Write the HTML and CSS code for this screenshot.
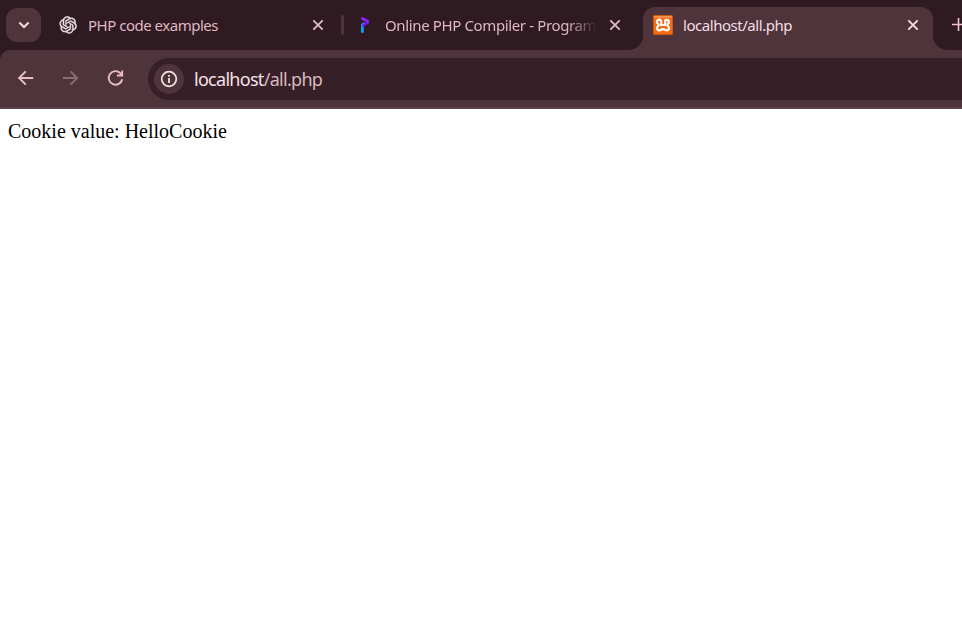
FILE: index.html
```html
<!DOCTYPE html>
<html lang="en">
<head>
<meta charset="utf-8">
<title>localhost/all.php</title>
<link rel="stylesheet" href="styles.css">
</head>
<body>
<header class="tab-strip">
  <button class="tab-search" aria-label="Search tabs">
    <svg width="12" height="8" viewBox="0 0 12 8"><path d="M1.3 1.5 6 6l4.7-4.5" fill="none" stroke="currentColor" stroke-width="2"/></svg>
  </button>
  <div class="tab tab-first">
    <svg class="favicon" viewBox="-2.2 -1.9 28 28"><path fill="#eee3e6" stroke="#eee3e6" stroke-width=".6" d="M22.2819 9.8211a5.9847 5.9847 0 0 0-.5157-4.9108 6.0462 6.0462 0 0 0-6.5098-2.9A6.0651 6.0651 0 0 0 4.9807 4.1818a5.9847 5.9847 0 0 0-3.9977 2.9 6.0462 6.0462 0 0 0 .7427 7.0966 5.98 5.98 0 0 0 .511 4.9107 6.051 6.051 0 0 0 6.5146 2.9001A5.9847 5.9847 0 0 0 13.2599 24a6.0557 6.0557 0 0 0 5.7718-4.2058 5.9894 5.9894 0 0 0 3.9977-2.9001 6.0557 6.0557 0 0 0-.7475-7.0729zm-9.022 12.6081a4.4755 4.4755 0 0 1-2.8764-1.0408l.1419-.0804 4.7783-2.7582a.7948.7948 0 0 0 .3927-.6813v-6.7369l2.02 1.1686a.071.071 0 0 1 .038.052v5.5826a4.504 4.504 0 0 1-4.4945 4.4944zm-9.6607-4.1254a4.4708 4.4708 0 0 1-.5346-3.0137l.142.0852 4.783 2.7582a.7712.7712 0 0 0 .7806 0l5.8428-3.3685v2.3324a.0804.0804 0 0 1-.0332.0615L9.74 19.9502a4.4992 4.4992 0 0 1-6.1408-1.6464zM2.3408 7.8956a4.485 4.485 0 0 1 2.3655-1.9728V11.6a.7664.7664 0 0 0 .3879.6765l5.8144 3.3543-2.0201 1.1685a.0757.0757 0 0 1-.071 0l-4.8303-2.7865A4.504 4.504 0 0 1 2.3408 7.872zm16.5963 3.8558L13.1038 8.364 15.1192 7.2a.0757.0757 0 0 1 .071 0l4.8303 2.7913a4.4944 4.4944 0 0 1-.6765 8.1042v-5.6772a.79.79 0 0 0-.407-.667zm2.0107-3.0231l-.142-.0852-4.7735-2.7818a.7759.7759 0 0 0-.7854 0L9.409 9.2297V6.8974a.0662.0662 0 0 1 .0284-.0615l4.8303-2.7866a4.4992 4.4992 0 0 1 6.6802 4.66zM8.3065 12.863l-2.02-1.1638a.0804.0804 0 0 1-.038-.0567V6.0742a4.4992 4.4992 0 0 1 7.3757-3.4537l-.142.0805L8.704 5.459a.7948.7948 0 0 0-.3927.6813zm1.0976-2.3654l2.602-1.4998 2.6069 1.4998v2.9994l-2.5974 1.4997-2.6067-1.4997Z"/></svg>
    <span class="tab-title"><span class="t-php">PHP code examples</span></span>
    <svg class="close" viewBox="0 0 12 12"><path d="m1.3 1.3 9.4 9.4m0-9.4-9.4 9.4"/></svg>
  </div>
  <div class="divider"></div>
  <div class="tab tab-second">
    <svg class="favicon" viewBox="0 0 20 20"><path d="M6 9.2 9.3 6.8v3.4L8.8 12v5.7H6z" fill="#0da5f2"/><path d="m6.3 2.6 2-.1 5.9 3.2v2.4L7.3 12.6V9.5l3.9-2.7-4.9-2.2z" fill="#7618ed"/><path d="m6.3 2.6 2-.1 5.9 3.2-1.9 1.2-6-2.5z" fill="#8a28f8"/></svg>
    <span class="tab-title fade"><span class="t-online">Online PHP Compiler - Program</span></span>
    <svg class="close" viewBox="0 0 12 12"><path d="m1.3 1.3 9.4 9.4m0-9.4-9.4 9.4"/></svg>
  </div>
  <div class="tab tab-active">
    <svg class="favicon" viewBox="0 0 20 20"><rect width="20" height="20" rx="1.5" fill="#cd580f"/><rect x="1" y="1" width="18" height="18" rx="1" fill="#f36c15"/><path d="M1 1h18v2H1z" fill="#f68f48"/><path d="M8.3 8.8V6.9A2.2 2.2 0 1 0 4.8 8.6Q6.4 10 4.8 11.5C2.8 13.5 5.2 16.6 8 14.9Q10 13.3 12 14.9c2.8 1.7 5.2-1.4 3.2-3.4Q13.6 10 15.2 8.6C17.2 6.4 14.6 3.8 12 5.5M7.8 10h4.4V6.2" fill="none" stroke="#fff" stroke-width="2.1" stroke-linecap="round" stroke-linejoin="round"/></svg>
    <span class="tab-title"><span class="t-local">localhost/all.php</span></span>
    <svg class="close" viewBox="0 0 12 12"><path d="m1.3 1.3 9.4 9.4m0-9.4-9.4 9.4"/></svg>
  </div>
  <svg class="new-tab" width="13" height="13" viewBox="0 0 13 13"><path d="M6.5 0v13M0 6.5h13"/></svg>
</header>
<nav class="toolbar">
  <svg class="nav-icon" viewBox="0 0 20 20"><path d="M17.2 10H3.4M9.8 3.3 3.1 10l6.7 6.7"/></svg>
  <svg class="nav-icon disabled" viewBox="0 0 20 20"><path d="M2 10h13.7M9.5 3.3l6.7 6.7-6.7 6.7"/></svg>
  <svg class="nav-icon" viewBox="0 0 20 20"><path d="M16.2 11.2a6.8 6.8 0 1 1-1.7-5.9l1.7 1.9M16.2 2.5v5h-5.2"/></svg>
  <div class="address-bar">
    <span class="site-info"><svg width="18" height="18" viewBox="0 0 18 18"><circle cx="9" cy="9" r="7.3" fill="none" stroke="currentColor" stroke-width="1.7"/><path d="M8.1 8h1.8v5H8.1zM8.1 4.9h1.8v1.8H8.1z" fill="currentColor"/></svg></span>
    <span class="url">localhost<span class="path">/all.php</span></span>
  </div>
</nav>
<main class="page"><span class="cookie">Cookie value: HelloCookie</span></main>
</body>
</html>
```

FILE: styles.css
```css
* { box-sizing: border-box; }
body {
  margin: 0;
  height: 642px;
  overflow: hidden;
  background: #fff;
  font-family: "Noto Sans", sans-serif;
}
.tab-strip {
  display: flex;
  align-items: flex-start;
  height: 50px;
  padding-left: 6px;
  background: #2f1a21;
  color: #dfb8c1;
}
.tab-search {
  display: grid;
  place-items: center;
  flex: none;
  width: 35px;
  height: 34px;
  margin: 8px 10px 0 0;
  padding: 0;
  border: 0;
  border-radius: 11px;
  background: #4f343c;
  color: #f0dce1;
}
.tab {
  display: flex;
  align-items: center;
  flex: none;
  height: 43px;
  margin-top: 7px;
  padding: 0 7px 7px;
}
.tab-first { width: 290px; }
.tab-second { width: 299px; padding-left: 11px; }
.tab-active {
  position: relative;
  width: 290px;
  padding-left: 10px;
  background: #4f343c;
  border-radius: 12px 12px 0 0;
  color: #f3dfe4;
}
.tab-active::before,
.tab-active::after {
  content: "";
  position: absolute;
  bottom: 0;
  width: 14px;
  height: 14px;
}
.tab-active::before { left: -14px; background: radial-gradient(circle at 0 0, transparent 13.5px, #4f343c 14.2px); }
.tab-active::after { right: -14px; background: radial-gradient(circle at 100% 0, transparent 13.5px, #4f343c 14.2px); }
.favicon { flex: none; width: 20px; height: 20px; }
.tab-title {
  flex: none;
  width: 210px;
  margin: 0 14px 0 10px;
  overflow: hidden;
  white-space: nowrap;
  font-size: 15px;
  line-height: 24px;
}
.fade {
  -webkit-mask-image: linear-gradient(90deg, #000 182px, transparent 212px);
  mask-image: linear-gradient(90deg, #000 182px, transparent 212px);
}
.t-php { letter-spacing: -0.49px; }
.t-online { letter-spacing: -0.37px; }
.t-local { letter-spacing: -0.46px; }
.close { flex: none; width: 12px; height: 12px; fill: none; stroke: currentColor; stroke-width: 1.9; }
.divider { flex: none; width: 3px; height: 20px; margin-top: 15px; border-radius: 2px; background: #4f343c; }
.new-tab { flex: none; margin: 18px 0 0 19px; fill: none; stroke: #f5c4d0; stroke-width: 1.6; }
.toolbar {
  display: flex;
  align-items: center;
  height: 59px;
  padding: 0 0 2px 16px;
  border-bottom: 2px solid #5c444b;
  background: radial-gradient(circle at 10px 10px, #4f343c 9.5px, #2f1a21 10.2px) 0 0 / 10px 10px no-repeat, linear-gradient(#4f343c, #4f343c) 10px 0 no-repeat, linear-gradient(#4f343c, #4f343c) 0 10px no-repeat;
  color: #e8bdc8;
}
.nav-icon { flex: none; width: 20px; height: 20px; margin-right: 25px; fill: none; stroke: currentColor; stroke-width: 1.9; }
.disabled { color: #8c6b74; }
.address-bar {
  display: flex;
  align-items: center;
  flex: 1;
  height: 42px;
  margin: 3px 0 0 -3px;
  padding-left: 6px;
  border-radius: 21px 0 0 21px;
  background: #361f27;
  color: #f6e2e7;
}
.site-info { display: grid; place-items: center; width: 30px; height: 30px; border-radius: 50%; background: #4f343c; }
.url { margin-left: 10px; font-size: 18px; line-height: 26px; letter-spacing: -0.71px; white-space: nowrap; }
.path { color: #d8b9c0; }
.page { padding: 11px 8px; color: #000; font: 20px/23px "Liberation Serif", serif; }
.cookie { white-space: nowrap; }
```
